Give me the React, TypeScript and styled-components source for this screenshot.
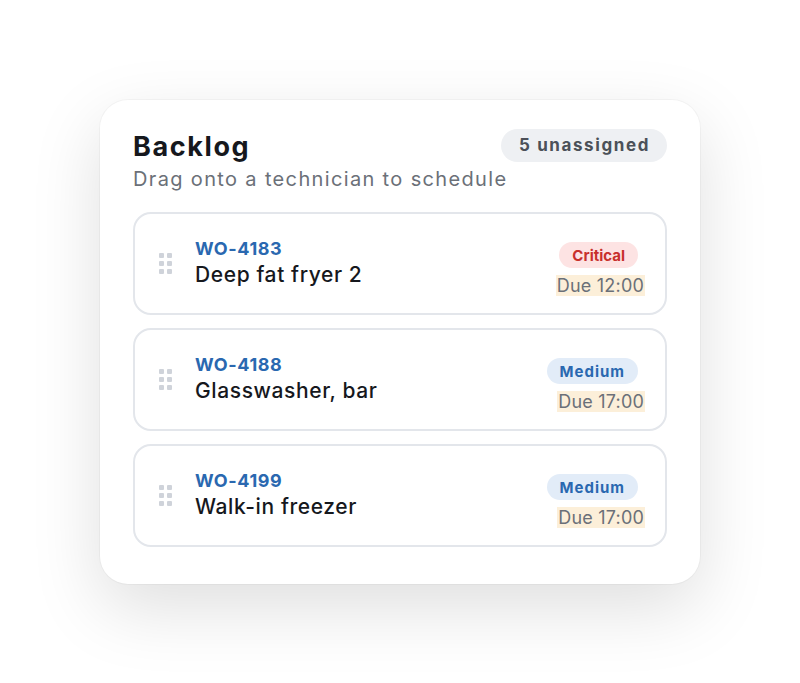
import React from "react";
import styled, { createGlobalStyle } from "styled-components";

const Global = createGlobalStyle`
  html, body { margin: 0; padding: 0; background: #ffffff; }
  body { font-family: Inter, "Open Sans", sans-serif; }
  #root { min-height: 100vh; }
`;

const Page = styled.div`
  min-height: 683px;
  display: flex;
  align-items: center;
  justify-content: center;
`;

const Card = styled.section`
  width: 600px;
  box-sizing: border-box;
  background: #ffffff;
  border-radius: 28px;
  padding: 29px 33px 37px;
  box-shadow: 0 0 0 1px rgba(0, 0, 0, 0.03), 0 24px 70px rgba(0, 0, 0, 0.13);
`;

const Header = styled.div`
  display: flex;
  align-items: flex-start;
  justify-content: space-between;
  gap: 12px;
`;

const Title = styled.h2`
  margin: 0;
  font-size: 27px;
  line-height: 36px;
  font-weight: 700;
  letter-spacing: 1.6px;
  color: #16181d;
  white-space: nowrap;
`;

const Subtitle = styled.p`
  margin: 0;
  font-size: 20px;
  line-height: 28px;
  letter-spacing: 1.35px;
  color: #6b7078;
  font-weight: 400;
  white-space: nowrap;
`;

const CountPill = styled.span`
  flex-shrink: 0;
  white-space: nowrap;
  padding: 0 17px 0 18px;
  height: 33px;
  display: inline-flex;
  align-items: center;
  border-radius: 17px;
  background: #eef0f3;
  color: #4b5058;
  font-size: 17px;
  letter-spacing: 1.6px;
  font-weight: 700;
`;

const List = styled.div`
  margin-top: 19px;
  display: flex;
  flex-direction: column;
  gap: 13px;
`;

const Row = styled.div`
  height: 103px;
  box-sizing: border-box;
  border: 2px solid #e3e6eb;
  border-radius: 18px;
  display: flex;
  align-items: center;
  padding: 0 20px 0 24px;
`;

const Handle = styled.div`
  display: grid;
  grid-template-columns: repeat(2, 5px);
  grid-auto-rows: 5px;
  gap: 3px;
  margin-right: 23px;
  & > span {
    background: #cfd3da;
    border-radius: 1px;
  }
`;

const Info = styled.div`
  flex: 1;
  display: flex;
  flex-direction: column;
  gap: 2px;
  white-space: nowrap;
`;

const Code = styled.span`
  font-size: 18px;
  line-height: 22px;
  font-weight: 700;
  letter-spacing: 0.6px;
  color: #2a68b0;
`;

const Name = styled.span`
  font-size: 21px;
  line-height: 26px;
  font-weight: 500;
  letter-spacing: 0.6px;
  color: #16181d;
`;

const Meta = styled.div`
  display: flex;
  flex-direction: column;
  align-items: flex-end;
  gap: 7px;
  margin-top: 12px;
  white-space: nowrap;
`;

const Priority = styled.span<{ $tone: "critical" | "medium" }>`
  margin-right: 7px;
  height: 26px;
  padding: 0 13px;
  display: inline-flex;
  align-items: center;
  border-radius: 13px;
  font-size: 15px;
  font-weight: 700;
  letter-spacing: ${(p) => (p.$tone === "critical" ? "0" : "1px")};
  background: ${(p) => (p.$tone === "critical" ? "#fde3e3" : "#e2ecf8")};
  color: ${(p) => (p.$tone === "critical" ? "#c8302c" : "#2a68b0")};
`;

const Due = styled.span`
  height: 21px;
  padding: 0 1px;
  display: inline-flex;
  align-items: center;
  background: #fcefd9;
  color: #6b7078;
  font-size: 18px;
  letter-spacing: 0.2px;
  font-weight: 400;
`;

type Item = { code: string; name: string; tone: "critical" | "medium"; label: string; due: string };

const items: Item[] = [
  { code: "WO-4183", name: "Deep fat fryer 2", tone: "critical", label: "Critical", due: "Due 12:00" },
  { code: "WO-4188", name: "Glasswasher, bar", tone: "medium", label: "Medium", due: "Due 17:00" },
  { code: "WO-4199", name: "Walk-in freezer", tone: "medium", label: "Medium", due: "Due 17:00" },
];

export default function App() {
  return (
    <>
      <Global />
      <Page>
        <Card>
          <Header>
            <Title>Backlog</Title>
            <CountPill>5 unassigned</CountPill>
          </Header>
          <Subtitle>Drag onto a technician to schedule</Subtitle>
          <List>
            {items.map((it) => (
              <Row key={it.code}>
                <Handle>
                  {Array.from({ length: 6 }).map((_, i) => (
                    <span key={i} />
                  ))}
                </Handle>
                <Info>
                  <Code>{it.code}</Code>
                  <Name>{it.name}</Name>
                </Info>
                <Meta>
                  <Priority $tone={it.tone}>{it.label}</Priority>
                  <Due>{it.due}</Due>
                </Meta>
              </Row>
            ))}
          </List>
        </Card>
      </Page>
    </>
  );
}
